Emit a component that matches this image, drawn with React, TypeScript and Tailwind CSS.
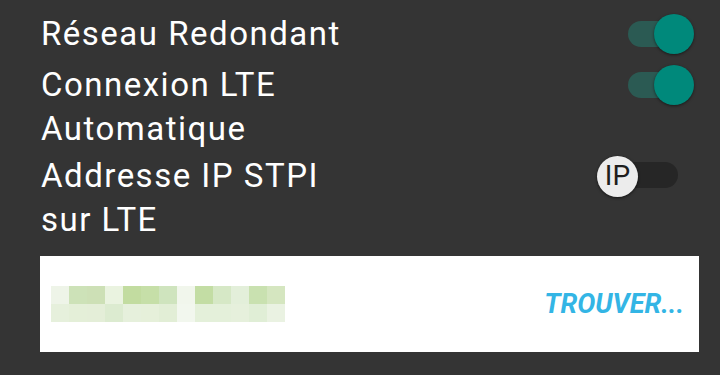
import React from "react";

const row1 = ["#eef4e8", "#cde2b8", "#cde0b6", "#eaf3e0", "#c2dca0", "#c6dfa8", "#cfe4be", "#f1f6ec", "#c3dda4", "#d6e8c6", "#e3efda", "#c9e1b0", "#d5e6c0"];
const row2 = ["#e6f0dc", "#e4efd8", "#e4eed8", "#dcebd0", "#e6f0dc", "#e6f0da", "#e2eed6", "#f2f7ee", "#e4f0da", "#e4f0da", "#e6f0dc", "#e0eed6", "#eaf2e2"];

function OnToggle() {
  return (
    <div className="h-[44px] flex items-center">
      <div className="relative w-[66px] h-[40px]">
        <div className="absolute left-0 top-[7px] w-[60px] h-[26px] rounded-full bg-[#2b5a53]" />
        <div className="absolute right-0 top-0 w-[40px] h-[40px] rounded-full bg-[#00897b] shadow-[0_1px_3px_rgba(0,0,0,0.5)]" />
      </div>
    </div>
  );
}

function OffToggle() {
  return (
    <div className="h-[44px] flex items-center">
      <div className="relative w-[81px] h-[41px]">
        <div className="absolute left-[8px] top-[6px] w-[73px] h-[26px] rounded-full bg-[#262626]" />
        <div className="absolute left-0 top-0 w-[41px] h-[41px] rounded-full bg-[#ececec] shadow-[0_1px_3px_rgba(0,0,0,0.6)] flex items-center justify-center text-[#1e1e1e] text-[28px] leading-none">
          IP
        </div>
      </div>
    </div>
  );
}

export default function App() {
  return (
    <div
      className="w-[720px] h-[375px] bg-[#343434] overflow-hidden text-white flex flex-col"
      style={{ fontFamily: "Roboto, 'Noto Sans', sans-serif" }}
    >
      <div className="flex items-start justify-between pl-[41px] pr-[26px] mt-[12px]">
        <div className="max-w-[312px] text-[33px] leading-[44px] tracking-[1.5px]">Réseau Redondant</div>
        <OnToggle />
      </div>
      <div className="flex items-start justify-between pl-[41px] pr-[26px] mt-[7px]">
        <div className="max-w-[312px] text-[33px] leading-[44px] tracking-[1.5px]">Connexion LTE Automatique</div>
        <OnToggle />
      </div>
      <div className="flex items-start justify-between pl-[41px] pr-[42px] mt-[3px]">
        <div className="max-w-[312px] text-[33px] leading-[44px] tracking-[1.5px]">Addresse IP STPI sur LTE</div>
        <OffToggle />
      </div>
      <div className="ml-[40px] mr-[21px] mt-[14px] h-[96px] bg-white flex items-center justify-between pl-[11px] pr-[15px]">
        <div className="flex flex-col">
          <div className="flex">
            {row1.map((c, i) => (
              <div key={i} className="w-[18px] h-[18px]" style={{ backgroundColor: c }} />
            ))}
          </div>
          <div className="flex">
            {row2.map((c, i) => (
              <div key={i} className="w-[18px] h-[18px]" style={{ backgroundColor: c }} />
            ))}
          </div>
        </div>
        <div className="text-[#33b5e5] text-[27px] font-bold italic leading-none">TROUVER...</div>
      </div>
    </div>
  );
}
